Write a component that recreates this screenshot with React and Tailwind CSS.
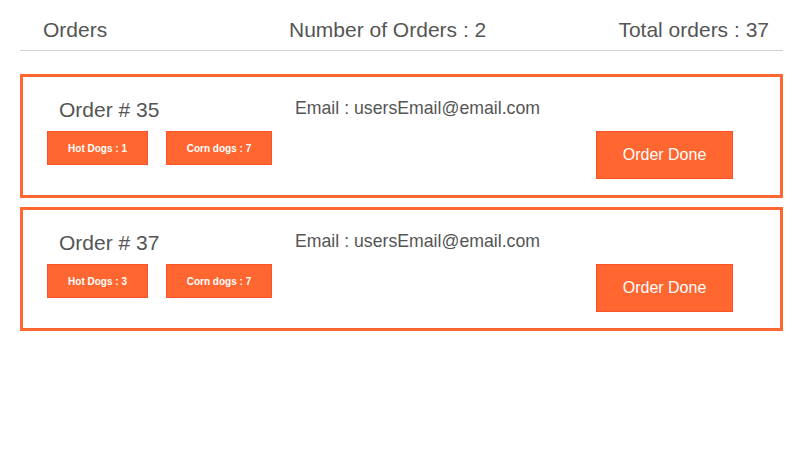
import React from 'react'

const orders = [
  { id: 35, email: 'usersEmail@email.com', hotDogs: 1, cornDogs: 7 },
  { id: 37, email: 'usersEmail@email.com', hotDogs: 3, cornDogs: 7 },
]

const Chip = ({ children, width }) => (
  <div
    className={`${width} h-[34px] flex items-center justify-center bg-[#ff6630] border border-[#ff5128] text-white text-[10px] font-semibold`}
  >
    {children}
  </div>
)

const OrderCard = ({ order }) => (
  <div className="border-[3px] border-[#ff6630] pt-[21px] pb-[16px] pl-[24px] pr-[47px] mb-[9px]">
    <div className="flex">
      <div className="w-[248px] pl-[12px] text-[21px] leading-[24px] text-[#555]">
        Order # {order.id}
      </div>
      <div className="text-[17.7px] leading-[20px] text-[#555]">
        Email : {order.email}
      </div>
    </div>
    <div className="flex items-start mt-[9px]">
      <div className="flex gap-[18px]">
        <Chip width="w-[101px]">Hot Dogs : {order.hotDogs}</Chip>
        <Chip width="w-[106px]">Corn dogs : {order.cornDogs}</Chip>
      </div>
      <button className="ml-auto w-[137px] h-[48px] bg-[#ff6630] border border-[#ff4d2a] text-white text-[16px]">
        Order Done
      </button>
    </div>
  </div>
)

export default function App() {
  return (
    <div className="min-h-screen bg-white font-['Liberation_Sans',Arial,sans-serif]">
      <div className="ml-[20px] w-[763px]">
        <div className="grid grid-cols-[246px_1fr_auto] pl-[23px] pr-[14px] pt-[18px] pb-[8px] border-b border-[#cfcfcf] text-[21px] leading-[24px] text-[#555]">
          <div>Orders</div>
          <div>Number of Orders : {orders.length}</div>
          <div>Total orders : 37</div>
        </div>
        <div className="mt-[23px]">
          {orders.map((order) => (
            <OrderCard key={order.id} order={order} />
          ))}
        </div>
      </div>
    </div>
  )
}
